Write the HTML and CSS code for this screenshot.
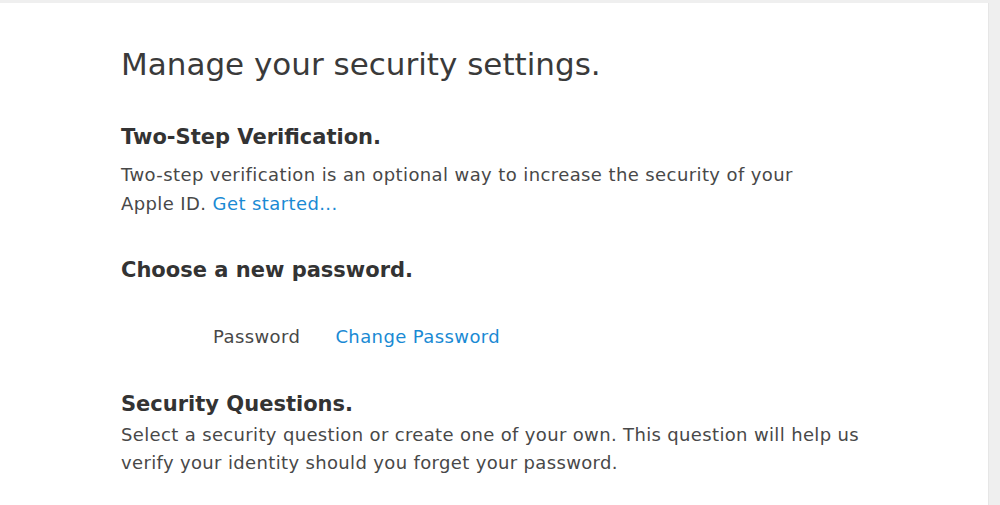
FILE: index.html
```html
<!DOCTYPE html>
<html>
<head>
    <meta charset="UTF-8">
    <title>Security settings</title>
    <link rel="stylesheet" href="styles.css">
</head>
<body>
    <div class="panel">
        <h1 class="title">Manage your security settings.</h1>

        <div class="section">
            <h2>Two-Step Verification.</h2>
            <p>Two-step verification is an optional way to increase the security of your<br>
               Apple ID. <a href="#">Get started...</a></p>
        </div>

        <div class="section">
            <h2>Choose a new password.</h2>
            <div class="password-row">
                <span class="label">Password</span>
                <a href="#">Change Password</a>
            </div>
        </div>

        <div class="section questions">
            <h2>Security Questions.</h2>
            <p>Select a security question or create one of your own. This question will help us<br>
               verify your identity should you forget your password.</p>
        </div>
    </div>
</body>
</html>
```

FILE: styles.css
```css
html, body {
    margin: 0;
    padding: 0;
    background-color: #efefef;
}
body {
    font-family: "DejaVu Sans", "Liberation Sans", sans-serif;
    color: #333;
    padding-top: 3px;
}
.panel {
    background-color: #fff;
    width: 989px;
    height: 502px;
    border-right: 1px solid #e6e6e6;
    box-sizing: border-box;
    padding: 43px 0 0 121px;
}
.title {
    font-size: 31px;
    line-height: 36px;
    font-weight: normal;
    margin: 0 0 42px 0;
    color: #3a3a3a;
}
.section h2 {
    font-size: 21px;
    line-height: 26px;
    font-weight: bold;
    margin: 0 0 10px 0;
    color: #333;
}
.section p {
    font-size: 18px;
    line-height: 29px;
    letter-spacing: 0.4px;
    margin: 0 0 39px 0;
    color: #484848;
}
.section a {
    color: #1a8ad4;
    text-decoration: none;
}
.password-row {
    font-size: 18px;
    line-height: 26px;
    letter-spacing: 0.4px;
    padding: 31px 0 0 92px;
    margin-bottom: 41px;
    color: #484848;
}
.password-row .label {
    margin-right: 29px;
}
.questions h2 {
    margin-bottom: 4px;
}
.questions p {
    line-height: 28px;
    letter-spacing: 0.35px;
}
```
